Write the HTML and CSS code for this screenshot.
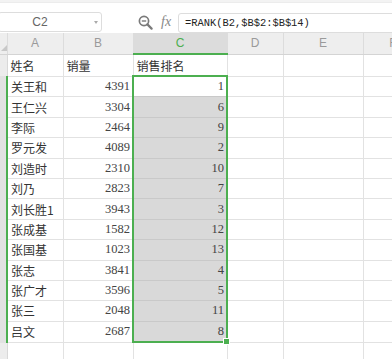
FILE: index.html
```html
<!DOCTYPE html>
<html>

<head>
    <meta charset="utf-8">
    <title>销售排名</title>
    <link rel="stylesheet" href="styles.css">
</head>

<body>
    <div class="top-strip"></div>
    <div class="formula-bar">
        <div class="name-box">
            <span class="name-ref">C2</span>
            <span class="name-arrow"></span>
        </div>
        <svg class="zoom-icon" width="15" height="15" viewBox="0 0 15 15">
            <circle cx="6" cy="6" r="4.6" fill="none" stroke="#7a7a7a" stroke-width="1.7"/>
            <line x1="3.8" y1="6" x2="8.2" y2="6" stroke="#7a7a7a" stroke-width="1.4"/>
            <line x1="9.4" y1="9.4" x2="13.6" y2="13.6" stroke="#7a7a7a" stroke-width="2.2" stroke-linecap="round"/>
        </svg>
        <span class="fx">fx</span>
        <div class="formula-input">=RANK(B2,$B$2:$B$14)</div>
    </div>

    <table class="sheet">
        <colgroup>
            <col class="w-head">
            <col class="w-a">
            <col class="w-b">
            <col class="w-c">
            <col class="w-d">
            <col class="w-e">
            <col class="w-f">
        </colgroup>
        <thead>
            <tr>
                <th class="corner"><span class="corner-mark"></span></th>
                <th>A</th>
                <th>B</th>
                <th class="col-active">C</th>
                <th>D</th>
                <th>E</th>
                <th>F</th>
            </tr>
        </thead>
        <tbody>
            <tr class="first-row">
                <td class="row-head"></td>
                <td>姓名</td>
                <td>销量</td>
                <td>销售排名</td>
                <td></td><td></td><td></td>
            </tr>
            <tr>
                <td class="row-head sel"></td>
                <td>关王和</td>
                <td class="num">4391</td>
                <td class="num pick pick-top active">1</td>
                <td></td><td></td><td></td>
            </tr>
            <tr>
                <td class="row-head sel"></td>
                <td>王仁兴</td>
                <td class="num">3304</td>
                <td class="num pick">6</td>
                <td></td><td></td><td></td>
            </tr>
            <tr>
                <td class="row-head sel"></td>
                <td>李际</td>
                <td class="num">2464</td>
                <td class="num pick">9</td>
                <td></td><td></td><td></td>
            </tr>
            <tr>
                <td class="row-head sel"></td>
                <td>罗元发</td>
                <td class="num">4089</td>
                <td class="num pick">2</td>
                <td></td><td></td><td></td>
            </tr>
            <tr>
                <td class="row-head sel"></td>
                <td>刘造时</td>
                <td class="num">2310</td>
                <td class="num pick">10</td>
                <td></td><td></td><td></td>
            </tr>
            <tr>
                <td class="row-head sel"></td>
                <td>刘乃</td>
                <td class="num">2823</td>
                <td class="num pick">7</td>
                <td></td><td></td><td></td>
            </tr>
            <tr>
                <td class="row-head sel"></td>
                <td>刘长胜1</td>
                <td class="num">3943</td>
                <td class="num pick">3</td>
                <td></td><td></td><td></td>
            </tr>
            <tr>
                <td class="row-head sel"></td>
                <td>张成基</td>
                <td class="num">1582</td>
                <td class="num pick">12</td>
                <td></td><td></td><td></td>
            </tr>
            <tr>
                <td class="row-head sel"></td>
                <td>张国基</td>
                <td class="num">1023</td>
                <td class="num pick">13</td>
                <td></td><td></td><td></td>
            </tr>
            <tr>
                <td class="row-head sel"></td>
                <td>张志</td>
                <td class="num">3841</td>
                <td class="num pick">4</td>
                <td></td><td></td><td></td>
            </tr>
            <tr>
                <td class="row-head sel"></td>
                <td>张广才</td>
                <td class="num">3596</td>
                <td class="num pick">5</td>
                <td></td><td></td><td></td>
            </tr>
            <tr>
                <td class="row-head sel"></td>
                <td>张三</td>
                <td class="num">2048</td>
                <td class="num pick">11</td>
                <td></td><td></td><td></td>
            </tr>
            <tr>
                <td class="row-head sel"></td>
                <td>吕文</td>
                <td class="num">2687</td>
                <td class="num pick pick-bottom">8<span class="fill-handle"></span></td>
                <td></td><td></td><td></td>
            </tr>
            <tr>
                <td class="row-head"></td>
                <td></td><td></td><td></td><td></td><td></td><td></td>
            </tr>
        </tbody>
    </table>
</body>

</html>
```

FILE: styles.css
```css
body {
    margin: 0;
    background: #ffffff;
    font-family: "Noto Sans CJK SC", "Noto Sans", sans-serif;
    color: #333333;
    overflow: hidden;
}

.top-strip {
    height: 3px;
    background: #f3f3f3;
    border-bottom: 1px solid #ececec;
    box-sizing: border-box;
}

.formula-bar {
    display: flex;
    align-items: flex-start;
    height: 30px;
    padding-top: 9px;
    box-sizing: border-box;
}

.name-box {
    display: flex;
    align-items: center;
    justify-content: space-between;
    width: 104px;
    height: 20px;
    margin-left: -2px;
    border: 1px solid #dddddd;
    border-radius: 3px;
    box-sizing: border-box;
}

.name-ref {
    width: 82px;
    text-align: center;
    font-family: "Liberation Sans", sans-serif;
    font-size: 12px;
    color: #666666;
}

.name-arrow {
    width: 0;
    height: 0;
    margin-right: 3px;
    border-left: 2.5px solid transparent;
    border-right: 2.5px solid transparent;
    border-top: 3px solid #aaaaaa;
}

.zoom-icon {
    margin-left: 36px;
    margin-top: 3px;
}

.fx {
    margin-left: 8px;
    margin-top: 2px;
    font-family: "Liberation Serif", serif;
    font-style: italic;
    font-size: 14px;
    color: #888888;
}

.formula-input {
    flex: 1;
    height: 20px;
    margin-left: 7px;
    margin-right: -10px;
    margin-top: 1px;
    padding-left: 6px;
    border: 1px solid #dddddd;
    border-radius: 3px;
    box-sizing: border-box;
    font-family: "Liberation Mono", monospace;
    font-size: 10.4px;
    line-height: 18px;
    color: #222222;
}

.sheet {
    table-layout: fixed;
    border-collapse: collapse;
    width: 423px;
}

.w-head { width: 7px; }
.w-a { width: 56px; }
.w-b { width: 70px; }
.w-c { width: 94px; }
.w-d { width: 56px; }
.w-e { width: 80px; }
.w-f { width: 60px; }

.sheet th {
    height: 20px;
    padding: 0;
    background: #eeeeee;
    border-right: 1px solid #dcdcdc;
    border-bottom: 1px solid #d4d4d4;
    font-family: "Liberation Sans", sans-serif;
    font-weight: normal;
    font-size: 12px;
    color: #9a9a9a;
    text-align: center;
}

.sheet th.col-active {
    background: #dcdcdc;
    color: #4caf50;
    border-bottom: 2px solid #4caf50;
}

.corner {
    position: relative;
}

.corner-mark {
    position: absolute;
    right: 0;
    bottom: 3px;
    width: 0;
    height: 0;
    border-left: 6px solid transparent;
    border-bottom: 6px solid #c8c8c8;
}

.sheet td {
    height: 19.4px;
    padding: 0 3px;
    border-right: 1px solid #e2e2e2;
    border-bottom: 1px solid #e2e2e2;
    font-size: 12px;
    white-space: nowrap;
    overflow: hidden;
}

.sheet .first-row td {
    height: 20px;
}

.sheet td.row-head {
    padding: 0;
    background: #ececec;
    border-right: 1px solid #d8d8d8;
}

.sheet td.row-head.sel {
    background: #e2e2e2;
    border-right: 2px solid #4caf50;
}

.sheet td.num {
    text-align: right;
    padding-right: 2px;
    font-family: "Liberation Serif", serif;
    font-size: 12.5px;
    color: #444444;
}

.sheet td.pick {
    background: #d9d9d9;
    border-left: 2px solid #4caf50;
    border-right: 2px solid #4caf50;
    border-bottom-color: #c9c9c9;
}

.sheet td.pick.active {
    background: #ffffff;
}

.sheet td.pick-top {
    border-top: 2px solid #4caf50;
}

.sheet td.pick-bottom {
    position: relative;
    overflow: visible;
    border-bottom: 2px solid #4caf50;
}

.fill-handle {
    position: absolute;
    right: -4px;
    bottom: -4px;
    width: 5px;
    height: 5px;
    background: #4caf50;
    border: 1px solid #ffffff;
}
```
